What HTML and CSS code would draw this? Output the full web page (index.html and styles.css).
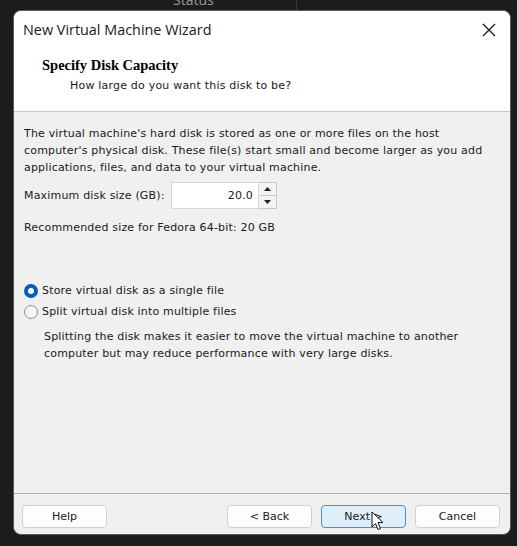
FILE: index.html
```html
<!DOCTYPE html>
<html>
<head>
<meta charset="utf-8">
<link rel="stylesheet" href="styles.css">
</head>
<body>
<div class="backdrop">
  <div class="topstrip"><span class="status">Status</span><span class="divider"></span></div>
  <div class="dialog">
    <div class="header">
      <div class="titlebar">
        <span class="title">New Virtual Machine Wizard</span>
        <svg class="close" width="16" height="16" viewBox="0 0 16 16"><path d="M2 2 L14 14 M14 2 L2 14" stroke="#1a1a1a" stroke-width="1.3" fill="none"/></svg>
      </div>
      <div class="heading">Specify Disk Capacity</div>
      <div class="subheading">How large do you want this disk to be?</div>
    </div>
    <div class="body">
      <p class="para">The virtual machine's hard disk is stored as one or more files on the host computer's physical disk. These file(s) start small and become larger as you add applications, files, and data to your virtual machine.</p>
      <div class="sizerow">
        <span class="label">Maximum disk size (GB):</span>
        <div class="spin">
          <div class="spinfield">20.0</div>
          <div class="spinbtns">
            <div class="spinbtn"><svg width="7" height="4" viewBox="0 0 7 4"><path d="M0 4 L3.5 0 L7 4Z" fill="#222"/></svg></div>
            <div class="spinbtn"><svg width="7" height="4" viewBox="0 0 7 4"><path d="M0 0 L3.5 4 L7 0Z" fill="#222"/></svg></div>
          </div>
        </div>
      </div>
      <div class="rec">Recommended size for Fedora 64-bit: 20 GB</div>
      <div class="options">
        <div class="radio"><span class="dot checked"></span><span>Store virtual disk as a single file</span></div>
        <div class="radio"><span class="dot"></span><span>Split virtual disk into multiple files</span></div>
        <p class="note">Splitting the disk makes it easier to move the virtual machine to another computer but may reduce performance with very large disks.</p>
      </div>
    </div>
    <div class="footer">
      <button class="btn">Help</button>
      <div class="spacer"></div>
      <button class="btn">&lt; Back</button>
      <button class="btn primary">Next &gt;<svg class="cursor" width="14" height="20" viewBox="0 0 14 20"><path d="M1 1 L1 16 L4.5 12.5 L7 18.5 L9.5 17.5 L7 11.5 L12 11.5 Z" fill="#fff" stroke="#111" stroke-width="1"/></svg></button>
      <button class="btn">Cancel</button>
    </div>
  </div>
</div>
</body>
</html>
```

FILE: styles.css
```css
* { box-sizing: border-box; }
html, body { margin: 0; padding: 0; }
body {
  background: #1c1c1c;
  width: 517px;
  height: 546px;
  overflow: hidden;
  font-family: "DejaVu Sans", Verdana, sans-serif;
}
.backdrop { display: flex; flex-direction: column; }
.topstrip {
  height: 10px;
  overflow: hidden;
  display: flex;
}
.status {
  margin-left: 173px;
  margin-top: -8px;
  font-family: "Open Sans", sans-serif;
  font-size: 14px;
  color: #9a9a9a;
  line-height: 16px;
}
.divider {
  margin-left: 82px;
  width: 1px;
  height: 10px;
  background: #3a3a3a;
}
.dialog {
  margin-left: 13px;
  width: 498px;
  height: 525px;
  border-radius: 8px;
  overflow: hidden;
  background: #f0f0f0;
  display: flex;
  flex-direction: column;
  border: 1px solid #5a5a5a;
}
.header {
  background: #fff;
  height: 101px;
  border-bottom: 1px solid #c8c8c8;
  flex: none;
}
.titlebar {
  display: flex;
  align-items: center;
  justify-content: space-between;
  height: 37px;
  padding: 0 13px 0 9px;
}
.title {
  font-family: "Open Sans", sans-serif;
  font-size: 14.4px;
  color: #1a1a1a;
}
.close { display: block; }
.heading {
  margin: 9px 0 0 28px;
  font-family: "Liberation Serif", serif;
  font-weight: bold;
  font-size: 14.5px;
  color: #000;
  line-height: 16px;
}
.subheading {
  margin: 5px 0 0 56px;
  font-size: 11px;
  letter-spacing: 0.2px;
  color: #1a1a1a;
  line-height: 16px;
}
.body {
  flex: 1;
  padding: 13px 10px 0 10px;
  font-size: 11px;
  letter-spacing: 0.18px;
  color: #1a1a1a;
}
.para {
  margin: 0;
  line-height: 17px;
  width: 460px;
}
.sizerow {
  display: flex;
  align-items: center;
  margin-top: 6px;
}
.label { width: 147px; }
.spin {
  display: flex;
  height: 27px;
}
.spinfield {
  width: 88px;
  background: #fff;
  border: 1px solid #d8d8d8;
  text-align: right;
  padding: 6px 5px 0 0;
  font-size: 11px;
}
.spinbtns {
  width: 18px;
  display: flex;
  flex-direction: column;
  border: 1px solid #c8c8c8;
  border-left: none;
  background: #f3f3f3;
}
.spinbtn {
  flex: 1;
  display: flex;
  align-items: center;
  justify-content: center;
}
.spinbtn + .spinbtn { border-top: 1px solid #c8c8c8; }
.rec { margin-top: 10px; line-height: 17px; }
.options { margin-top: 44px; }
.radio {
  display: flex;
  align-items: center;
  height: 21px;
  gap: 4px;
}
.dot {
  width: 14px;
  height: 14px;
  border-radius: 50%;
  border: 1px solid #8a8a8a;
  background: #f8f8f8;
  flex: none;
}
.dot.checked {
  border: 4px solid #005fb8;
  background: #fff;
}
.note {
  margin: 6px 0 0 20px;
  line-height: 17px;
  width: 445px;
}
.footer {
  flex: none;
  height: 41px;
  border-top: 1px solid #b0b0b0;
  display: flex;
  align-items: flex-start;
  padding: 11px 10px 0 8px;
  gap: 9px;
}
.spacer { flex: 1; }
.btn {
  width: 85px;
  height: 23px;
  border: 1px solid #d0d0d0;
  border-radius: 4px;
  background: #fdfdfd;
  font-family: "DejaVu Sans", Verdana, sans-serif;
  font-size: 11px;
  color: #1a1a1a;
  padding: 0;
  position: relative;
}
.btn.primary {
  background: #e0eef9;
  border-color: #4a8fd6;
}
.cursor {
  position: absolute;
  left: 49px;
  top: 5px;
}
```
